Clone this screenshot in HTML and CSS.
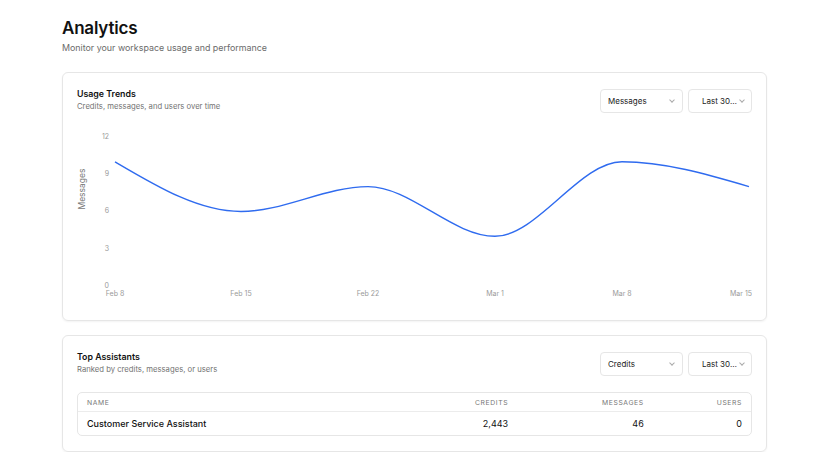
FILE: index.html
```html
<!DOCTYPE html>
<html lang="en">

<head>
    <meta charset="UTF-8">
    <meta name="viewport" content="width=device-width, initial-scale=1.0">
    <title>Analytics</title>
    <link rel="stylesheet" href="styles.css">
</head>

<body>

    <div class="page">
        <div class="pagehead">
            <h1>Analytics</h1>
            <p>Monitor your workspace usage and performance</p>
        </div>

        <div class="card">
            <div class="cardhead">
                <div class="cardtitle">
                    <h2>Usage Trends</h2>
                    <p>Credits, messages, and users over time</p>
                </div>
                <div class="selects">
                    <div class="select wide"><span class="val">Messages</span><span class="chev"></span></div>
                    <div class="select"><span class="val">Last 30…</span><span class="chev"></span></div>
                </div>
            </div>
            <svg class="chart" width="675" height="176" viewBox="0 0 675 176">
                <g class="ytick" text-anchor="end">
                    <text x="32" y="8">12</text>
                    <text x="32" y="45">9</text>
                    <text x="32" y="82">6</text>
                    <text x="32" y="120">3</text>
                    <text x="32" y="157">0</text>
                </g>
                <text class="ylabel" transform="translate(6 60) rotate(-90)" text-anchor="middle">Messages</text>
                <g class="xtick" text-anchor="middle">
                    <text x="38" y="165">Feb 8</text>
                    <text x="164" y="165">Feb 15</text>
                    <text x="291" y="165">Feb 22</text>
                    <text x="418" y="165">Mar 1</text>
                    <text x="545" y="165">Mar 8</text>
                    <text x="675" y="165" text-anchor="end">Mar 15</text>
                </g>
                <path class="line" d="M38,32.8 C80.3,57.7 121.7,82.5 164,82.5 C206.3,82.5 248.7,57.6 291,57.6 C333.3,57.6 375.7,107.3 418,107.3 C460.3,107.3 502.7,32.8 545,32.8 C587.3,32.8 629.7,45.2 672,57.6" />
            </svg>
        </div>

        <div class="card">
            <div class="cardhead">
                <div class="cardtitle">
                    <h2>Top Assistants</h2>
                    <p>Ranked by credits, messages, or users</p>
                </div>
                <div class="selects">
                    <div class="select wide"><span class="val">Credits</span><span class="chev"></span></div>
                    <div class="select"><span class="val">Last 30…</span><span class="chev"></span></div>
                </div>
            </div>
            <table class="table">
                <thead>
                    <tr>
                        <th class="namecol">Name</th>
                        <th>Credits</th>
                        <th>Messages</th>
                        <th>Users</th>
                    </tr>
                </thead>
                <tbody>
                    <tr>
                        <td class="namecol">Customer Service Assistant</td>
                        <td>2,443</td>
                        <td>46</td>
                        <td>0</td>
                    </tr>
                </tbody>
            </table>
        </div>
    </div>

</body>

</html>
```

FILE: styles.css
```css
* {
    font-family: "Inter", "Liberation Sans", sans-serif;
    margin: 0;
    padding: 0;
    box-sizing: border-box;
}

body {
    background-color: #ffffff;
    color: #111111;
}

.page {
    width: 705px;
    margin-left: 62px;
    padding-top: 17px;
}

.pagehead {
    margin-bottom: 18px;
}

.pagehead h1 {
    font-size: 17px;
    font-weight: 600;
    letter-spacing: -0.2px;
    line-height: 22px;
}

.pagehead p {
    font-size: 8.9px;
    color: #6b6b6b;
    margin-top: 3px;
    line-height: 12px;
}

.card {
    border: 1px solid #e6e6e6;
    border-radius: 6px;
    box-shadow: 0 1px 2px rgba(0, 0, 0, 0.05);
    padding: 15px 14px 15px 14px;
    margin-top: 14px;
}

.page .card:first-of-type {
    margin-top: 0;
}

.cardhead {
    display: flex;
    justify-content: space-between;
    align-items: flex-start;
}

.cardtitle h2 {
    font-size: 8.8px;
    font-weight: 600;
    line-height: 12px;
}

.cardtitle p {
    font-size: 7.7px;
    color: #737373;
    line-height: 11px;
    margin-top: 1px;
}

.selects {
    display: flex;
    gap: 5px;
    margin-top: 1px;
}

.select {
    display: flex;
    align-items: center;
    gap: 3px;
    height: 24px;
    width: 64px;
    padding: 0 8px 0 13px;
    border: 1px solid #e6e6e6;
    border-radius: 4px;
    font-size: 8px;
    color: #222222;
}

.select.wide {
    width: 83px;
    padding-left: 7px;
}

.val {
    flex: 1;
    white-space: nowrap;
}

.chev {
    flex: none;
    width: 4px;
    height: 4px;
    border-right: 1px solid #aaaaaa;
    border-bottom: 1px solid #aaaaaa;
    transform: rotate(45deg);
    margin-top: -2px;
}

.chart {
    display: block;
    margin-top: 16px;
}

.ytick text,
.xtick text {
    font-size: 7px;
    fill: #9a9a9a;
    dominant-baseline: middle;
}

.ylabel {
    font-size: 8.5px;
    fill: #777777;
    dominant-baseline: middle;
}

.line {
    fill: none;
    stroke: #2f6bef;
    stroke-width: 1.4;
}

.table {
    width: 100%;
    margin-top: 16px;
    border-collapse: separate;
    border-spacing: 0;
    border: 1px solid #e6e6e6;
    border-radius: 5px;
}

.table th {
    font-size: 6.8px;
    font-weight: 400;
    text-transform: uppercase;
    letter-spacing: 0.6px;
    color: #777777;
    text-align: right;
    height: 19px;
    padding: 0 9px;
    border-bottom: 1px solid #ececec;
}

.table td {
    font-size: 9px;
    font-weight: 400;
    text-align: right;
    height: 23px;
    padding: 0 9px;
}

.table .namecol {
    text-align: left;
    width: 48%;
    font-weight: 500;
}

.table th.namecol {
    font-weight: 400;
}
```
